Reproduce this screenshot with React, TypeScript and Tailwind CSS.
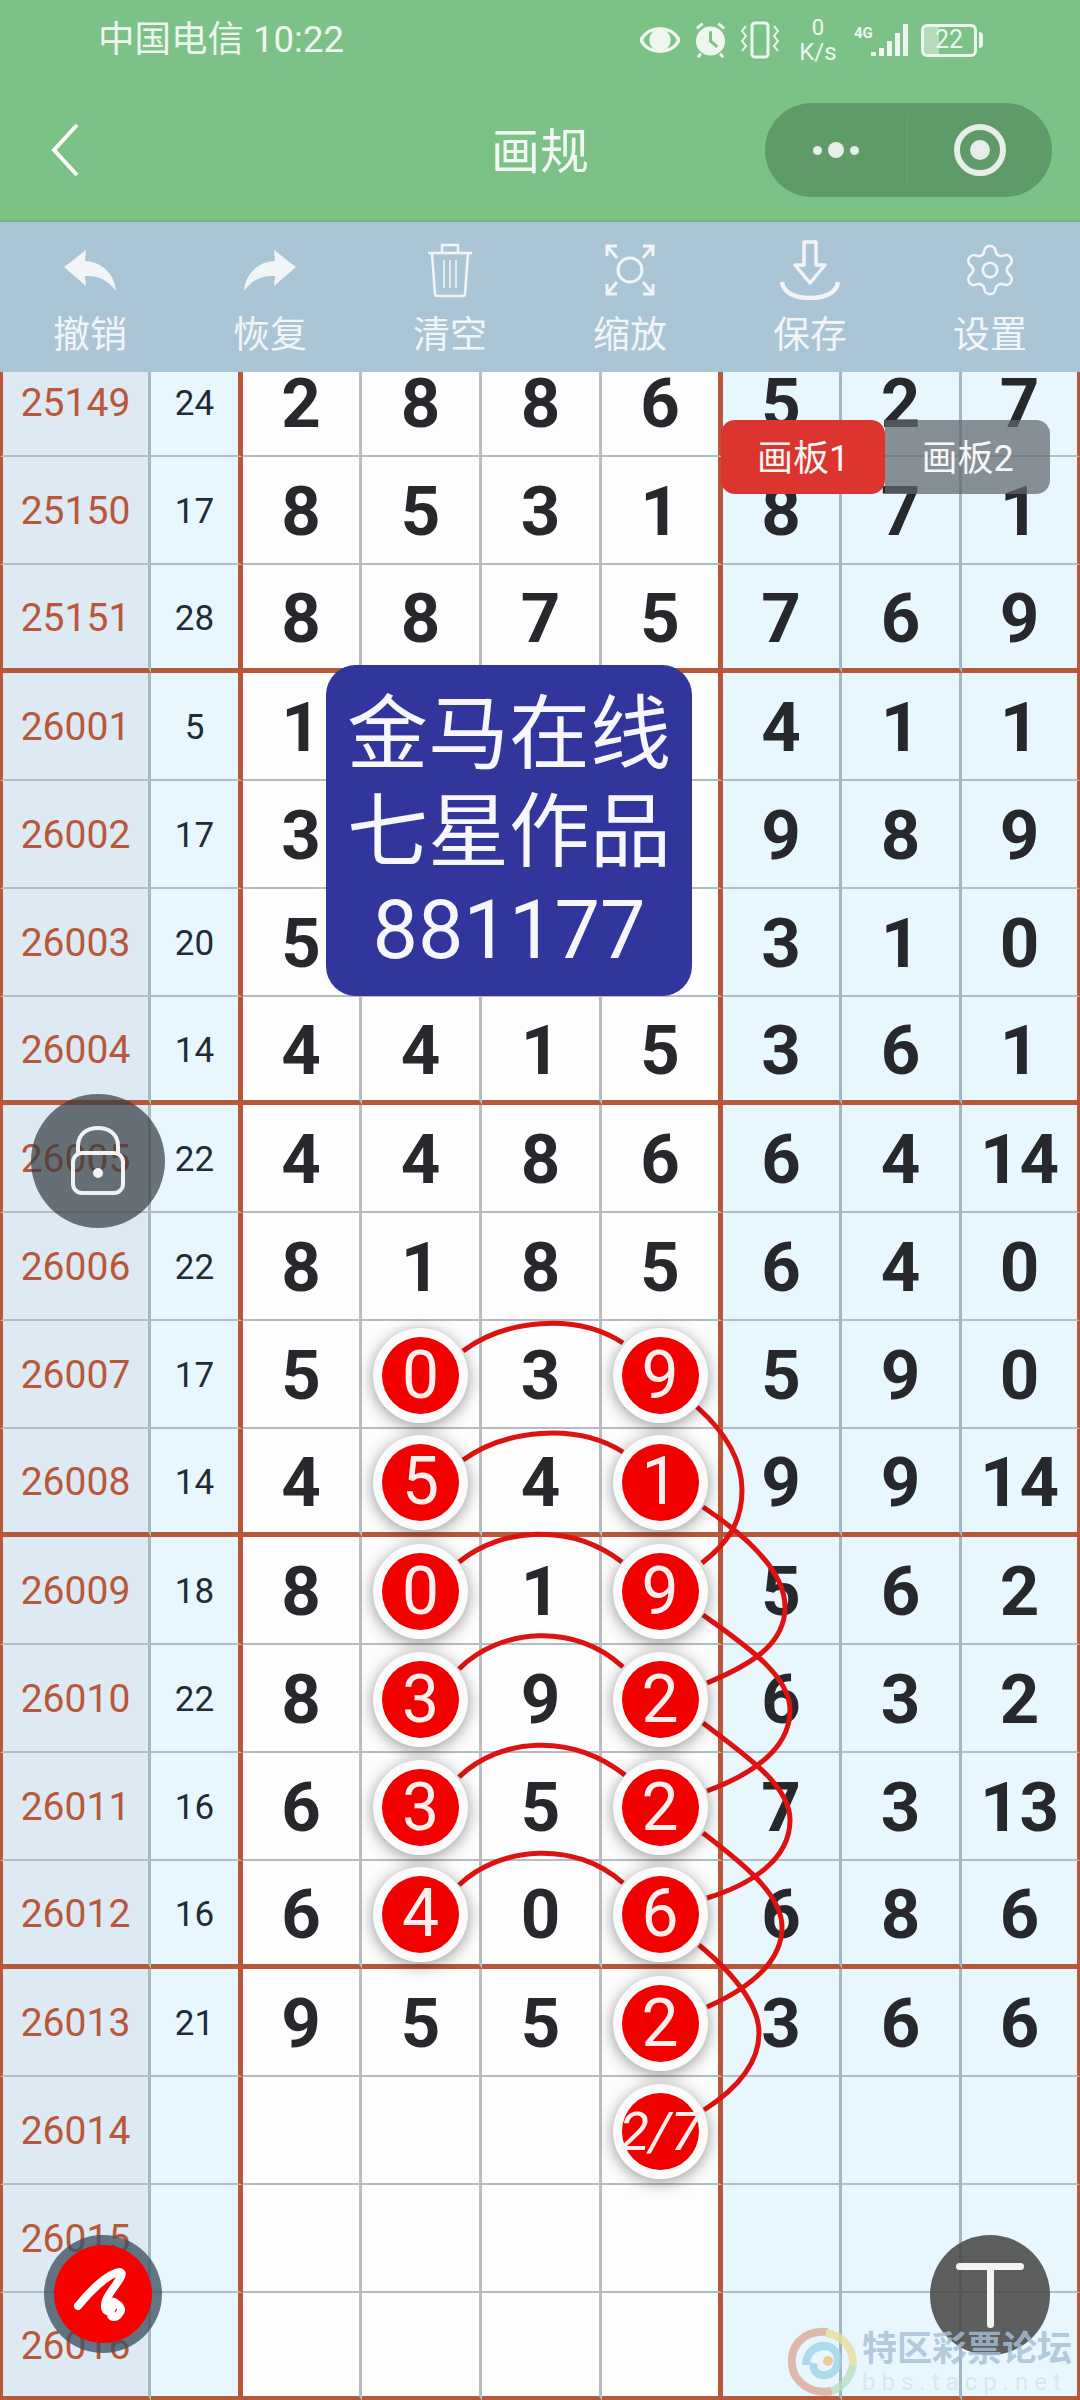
import React from 'react';
import { Settings } from 'lucide-react';

type Row = { id: string; sum: string; cells: string[]; balls?: number[]; thick?: boolean };

const rows: Row[] = [
  { id: '25149', sum: '24', cells: ['2', '8', '8', '6', '5', '2', '7'] },
  { id: '25150', sum: '17', cells: ['8', '5', '3', '1', '8', '7', '1'] },
  { id: '25151', sum: '28', cells: ['8', '8', '7', '5', '7', '6', '9'], thick: true },
  { id: '26001', sum: '5', cells: ['1', '', '', '', '4', '1', '1'] },
  { id: '26002', sum: '17', cells: ['3', '', '', '', '9', '8', '9'] },
  { id: '26003', sum: '20', cells: ['5', '', '', '', '3', '1', '0'] },
  { id: '26004', sum: '14', cells: ['4', '4', '1', '5', '3', '6', '1'], thick: true },
  { id: '26005', sum: '22', cells: ['4', '4', '8', '6', '6', '4', '14'] },
  { id: '26006', sum: '22', cells: ['8', '1', '8', '5', '6', '4', '0'] },
  { id: '26007', sum: '17', cells: ['5', '0', '3', '9', '5', '9', '0'], balls: [1, 3] },
  { id: '26008', sum: '14', cells: ['4', '5', '4', '1', '9', '9', '14'], balls: [1, 3], thick: true },
  { id: '26009', sum: '18', cells: ['8', '0', '1', '9', '5', '6', '2'], balls: [1, 3] },
  { id: '26010', sum: '22', cells: ['8', '3', '9', '2', '6', '3', '2'], balls: [1, 3] },
  { id: '26011', sum: '16', cells: ['6', '3', '5', '2', '7', '3', '13'], balls: [1, 3] },
  { id: '26012', sum: '16', cells: ['6', '4', '0', '6', '6', '8', '6'], balls: [1, 3], thick: true },
  { id: '26013', sum: '21', cells: ['9', '5', '5', '2', '3', '6', '6'], balls: [3] },
  { id: '26014', sum: '', cells: ['', '', '', '2/7', '', '', ''], balls: [3] },
  { id: '26015', sum: '', cells: ['', '', '', '', '', '', ''] },
  { id: '26016', sum: '', cells: ['', '', '', '', '', '', ''], thick: true },
];

const curves = [
  'M463 1351 C505 1320 575 1312 623 1343',
  'M463 1460 C505 1430 575 1422 623 1452',
  'M459 1562 C500 1528 570 1522 622 1562',
  'M459 1669 C500 1628 575 1622 623 1667',
  'M459 1777 C500 1738 570 1732 625 1775',
  'M459 1885 C500 1846 575 1840 623 1883',
  'M697 1407 C725 1432 742 1460 742 1490 C742 1525 725 1545 702 1563',
  'M703 1507 C745 1535 785 1570 785 1607 C785 1645 750 1665 707 1683',
  'M703 1615 C745 1645 790 1675 790 1710 C790 1750 750 1775 707 1791',
  'M703 1723 C745 1755 790 1785 790 1820 C790 1860 750 1885 707 1898',
  'M703 1833 C745 1865 782 1895 782 1927 C782 1965 745 1990 707 2007',
  'M699 1945 C735 1975 759 2005 759 2033 C759 2065 735 2090 704 2110',
];

const UndoIcon = ({ flip }: { flip?: boolean }) => (
  <svg width="60" height="60" viewBox="0 0 60 60" className={flip ? '-scale-x-100' : ''} fill="#f1f5f7">
    <path d="M4 27 L26 10 L25 21 C44 22 55 36 56 51 C48 40 38 35 25 36 L26 46 Z" />
  </svg>
);

const TrashIcon = () => (
  <svg width="60" height="60" viewBox="0 0 60 60" fill="none" stroke="#f1f5f7" strokeWidth="2.5">
    <path d="M8 13 H52 M22 12 V5 H38 V12" />
    <path d="M12 14 L15 54 Q15 56 18 56 H42 Q45 56 45 54 L48 14" />
    <path d="M24 20 V48 M30 20 V48 M36 20 V48" strokeWidth="1.6" />
  </svg>
);

const ScanIcon = () => (
  <svg width="60" height="60" viewBox="0 0 60 60" fill="none" stroke="#f1f5f7" strokeWidth="3">
    <circle cx="30" cy="30" r="12" />
    <path d="M7 16 V6 H17 M7 6 L17 18 M53 16 V6 H43 M53 6 L43 18 M7 44 V54 H17 M7 54 L17 42 M53 44 V54 H43 M53 54 L43 42" />
  </svg>
);

const SaveIcon = () => (
  <svg width="60" height="60" viewBox="0 0 60 60" fill="none" stroke="#f1f5f7" strokeWidth="3.5">
    <path d="M24 2 H36 V25 H45 L30 43 L15 25 H24 Z" strokeLinejoin="round" />
    <path d="M2 42 C3 52 14 58 30 58 C46 58 57 52 58 42" strokeWidth="4.5" />
  </svg>
);

const tools = [
  { label: '撤销', icon: <UndoIcon /> },
  { label: '恢复', icon: <UndoIcon flip /> },
  { label: '清空', icon: <TrashIcon /> },
  { label: '缩放', icon: <ScanIcon /> },
  { label: '保存', icon: <SaveIcon /> },
  { label: '设置', icon: <Settings size={58} strokeWidth={1.1} color="#f1f5f7" /> },
];

const StatusIcons = () => (
  <div className="flex items-center text-[#eef6ef]">
    <svg width="40" height="40" viewBox="0 0 40 40" fill="none" stroke="currentColor" strokeWidth="3.5">
      <path d="M1 20 C8 5 32 5 39 20 C32 35 8 35 1 20 Z" />
      <circle cx="20" cy="20" r="9" fill="currentColor" />
    </svg>
    <svg width="33" height="40" viewBox="0 0 34 40" className="ml-[14px]">
      <circle cx="17" cy="21" r="15" fill="currentColor" />
      <path d="M17 11 V21 L24 27" fill="none" stroke="#7cc286" strokeWidth="3" />
      <path d="M3 8 L9 3 M31 8 L25 3 M7 34 L4 38 M27 34 L30 38" stroke="currentColor" strokeWidth="3" />
    </svg>
    <svg width="40" height="40" viewBox="0 0 40 40" fill="none" stroke="currentColor" strokeWidth="3" className="ml-[13px]">
      <rect x="12" y="3" width="16" height="34" rx="3" />
      <path d="M6 6 L2 11 L6 16 L2 21 L6 26 L2 31 M34 6 L38 11 L34 16 L38 21 L34 26 L38 31" strokeWidth="2" />
    </svg>
    <div className="ml-[19px] w-[38px] flex flex-col items-center text-[22px] leading-[24px]">
      <span>0</span>
      <span className="text-[24px]">K/s</span>
    </div>
    <span className="ml-[17px] w-[17px] text-[15px] leading-[16px] font-bold -mt-[14px]">4G</span>
    <div className="flex items-end gap-[3px] h-[32px]">
      <span className="w-[5px] h-[4px] bg-current" />
      <span className="w-[5px] h-[8px] bg-current" />
      <span className="w-[5px] h-[15px] bg-current" />
      <span className="w-[5px] h-[23px] bg-current" />
      <span className="w-[5px] h-[32px] bg-current" />
    </div>
    <div className="ml-[13px] flex items-center">
      <div className="w-[56px] h-[33px] border-[3px] border-current rounded-[6px] flex items-center justify-center text-[25px] bg-[linear-gradient(90deg,#b4dcba_30%,transparent_30%)]">
        22
      </div>
      <span className="w-[4px] h-[16px] bg-current ml-[2px] rounded-r-sm" />
    </div>
  </div>
);

const Ball = ({ text }: { text: string }) => (
  <div className="relative z-20 w-[95px] h-[95px] rounded-full bg-[#fbfbfb] shadow-[0_3px_16px_rgba(0,0,0,0.4)] flex items-center justify-center">
    <div className="w-[77px] h-[77px] rounded-full bg-[#f20000] flex items-center justify-center font-normal">
      <span className={text.length > 1 ? 'text-[#fdeeee] text-[54px] leading-none italic whitespace-nowrap' : 'text-[#fdeeee] text-[66px] leading-none'}>
        {text}
      </span>
    </div>
  </div>
);

const GridRow = ({ row }: { row: Row }) => {
  const line = row.thick ? 'border-b-[5px] border-b-[#b9573a]' : 'border-b-2 border-b-[#b3bcc2]';
  return (
    <div className="grid grid-cols-[151px_92px_119px_120px_120px_121px_119px_120px_118px] h-[108px] shrink-0">
      <div className={`${line} border-l-[3px] border-l-[#b9573a] border-r-[3px] border-r-[#a9b8c2] bg-[#dde9f3] flex items-center justify-center pt-[3px] text-[39px] leading-none text-[#b9573a]`}>
        {row.id}
      </div>
      <div className={`${line} border-r-[5px] border-r-[#b9573a] bg-[#e8f7fe] flex items-center justify-center pt-[3px] text-[35px] leading-none text-[#1f2c33]`}>
        {row.sum}
      </div>
      {row.cells.map((cell, i) => {
        const tint = i > 3 ? 'bg-[#e8f7fe] border-r-[#a3b5c0]' : 'bg-[#fdfdfd] border-r-[#b9bdc0]';
        const right = i === 3 ? 'border-r-[5px] !border-r-[#b9573a]' : i === 6 ? 'border-r-[3px] !border-r-[#b9573a]' : 'border-r-[3px]';
        return (
          <div key={i} className={`${line} ${tint} ${right} flex items-center justify-center pt-[3px] text-[69px] leading-none font-bold text-[#26282b]`}>
            {row.balls?.includes(i) ? <Ball text={cell} /> : cell}
          </div>
        );
      })}
    </div>
  );
};

export default function App() {
  return (
    <div className="w-[1080px] h-[2400px] overflow-hidden flex flex-col font-['Roboto','Noto_Sans_CJK_SC',sans-serif]">
      <header className="h-[222px] shrink-0 bg-[#7cc286] border-b-2 border-b-[#74b47e]">
        <div className="h-[80px] flex items-center justify-between pl-[98px] pr-[97px]">
          <span className="text-[36.5px] text-[#eef6ef]">中国电信 10:22</span>
          <StatusIcons />
        </div>
        <div className="h-[140px] grid grid-cols-[1fr_auto_1fr] items-center">
          <svg width="30" height="54" viewBox="0 0 30 54" fill="none" stroke="#ffffff" strokeWidth="4" className="ml-[50px]">
            <path d="M27 2 L4 27 L27 52" />
          </svg>
          <span className="pt-[5px] text-[49px] text-[#f4f8f4]">画规</span>
          <div className="justify-self-end mr-[28px] w-[287px] h-[94px] rounded-full bg-[#5f9a69] flex items-center">
            <div className="w-[143px] h-[70px] border-r border-r-[#6ba575] flex items-center justify-center gap-[6px]">
              <span className="w-[9px] h-[9px] rounded-full bg-[#e6efe7]" />
              <span className="w-[16px] h-[16px] rounded-full bg-[#e6efe7]" />
              <span className="w-[9px] h-[9px] rounded-full bg-[#e6efe7]" />
            </div>
            <div className="flex-1 flex items-center justify-center">
              <div className="w-[52px] h-[52px] rounded-full border-[6px] border-[#e6efe7] flex items-center justify-center">
                <span className="w-[20px] h-[20px] rounded-full bg-[#e6efe7]" />
              </div>
            </div>
          </div>
        </div>
      </header>

      <nav className="h-[150px] shrink-0 bg-[#a9c5d6] grid grid-cols-6 pt-[18px]">
        {tools.map((tool) => (
          <div key={tool.label} className="flex flex-col items-center">
            <div className="h-[60px] flex items-center justify-center">{tool.icon}</div>
            <span className="mt-[14px] text-[37px] leading-[44px] text-[#f1f5f7]">{tool.label}</span>
          </div>
        ))}
      </nav>

      <main className="relative flex-1 overflow-hidden">
        <div className="flex flex-col -mt-[23px]">
          {rows.map((row) => (
            <GridRow key={row.id} row={row} />
          ))}
        </div>

        <svg
          width="1080"
          height="2028"
          viewBox="0 372 1080 2028"
          fill="none"
          stroke="#df1212"
          strokeWidth="5"
          className="absolute inset-0 z-10 pointer-events-none"
        >
          {curves.map((d) => (
            <path key={d} d={d} />
          ))}
        </svg>

        <div className="absolute left-[721px] top-[48px] z-30 flex h-[74px] text-[36px] text-[#f6f6f6]">
          <div className="w-[164px] pt-[4px] rounded-[14px] bg-[#dc3530] flex items-center justify-center">画板1</div>
          <div className="w-[165px] pt-[4px] rounded-r-[14px] bg-[rgba(95,103,108,0.72)] flex items-center justify-center">画板2</div>
        </div>

        <div className="absolute left-[326px] top-[293px] z-30 w-[366px] h-[331px] pt-[4px] rounded-[30px] bg-[#32359b] flex flex-col items-center justify-center text-[81px] leading-[98px] text-[#f7f7fb]">
          <span>金马在线</span>
          <span>七星作品</span>
          <span>881177</span>
        </div>

        <div className="absolute left-[31px] top-[722px] z-30 w-[134px] h-[134px] rounded-full bg-[rgba(52,58,64,0.7)] flex items-center justify-center">
          <svg width="56" height="72" viewBox="0 0 56 72" fill="none" stroke="#f2f2f2" strokeWidth="4">
            <path d="M8 30 V21 C8 9 17 3 28 3 C39 3 48 9 48 21 V30" />
            <rect x="3" y="28" width="50" height="40" rx="9" />
            <circle cx="28" cy="48" r="5" fill="#f2f2f2" stroke="none" />
          </svg>
        </div>

        <div className="absolute left-[44px] top-[1863px] z-30 w-[118px] h-[118px] rounded-full bg-[rgba(62,82,96,0.78)] flex items-center justify-center">
          <div className="w-[98px] h-[98px] rounded-full bg-[#f60000] flex items-center justify-center">
            <svg width="60" height="60" viewBox="0 0 60 60" fill="none" stroke="#ffffff" strokeWidth="8" strokeLinecap="round" strokeLinejoin="round">
              <path d="M5 42 C16 28 35 9 47 8 C53 10 42 20 34 34 C30 42 32 50 38 46 C42 40 36 36 41 38 C48 42 50 46 46 50 C42 55 38 53 38 50" />
            </svg>
          </div>
        </div>

        <div className="absolute left-[930px] top-[1863px] z-30 w-[120px] h-[120px] rounded-full bg-[rgba(70,70,68,0.86)] flex flex-col items-center pt-[28px]">
          <span className="w-[68px] h-[7px] rounded-full bg-[#f4f4f4]" />
          <span className="w-[7px] h-[58px] rounded-b-full bg-[#f4f4f4]" />
        </div>

        <div className="absolute left-[788px] top-[1955px] z-40 flex items-center opacity-80">
          <svg width="70" height="70" viewBox="0 0 70 70" fill="none" strokeWidth="8">
            <path d="M40 5 C15 2 2 20 4 38 C6 56 24 68 44 64" stroke="#dba99a" />
            <path d="M38 6 C55 8 66 22 65 38" stroke="#e6df9a" />
            <path d="M65 38 C62 52 54 60 44 64" stroke="#b9dfc0" />
            <path d="M18 38 C18 24 30 16 42 20 C54 26 52 46 38 48 C30 49 24 44 26 36" stroke="#9fd5e8" />
            <circle cx="40" cy="34" r="5" fill="#eec27a" stroke="none" />
          </svg>
          <div className="ml-[4px] flex flex-col items-start">
            <span className="text-[35px] leading-[40px] font-bold text-[#a7bfd6] whitespace-nowrap">特区彩票论坛</span>
            <span className="text-[24px] leading-[24px] tracking-[6px] text-[#d6e2ec] whitespace-nowrap">bbs.tacp.net</span>
          </div>
        </div>
      </main>
    </div>
  );
}
